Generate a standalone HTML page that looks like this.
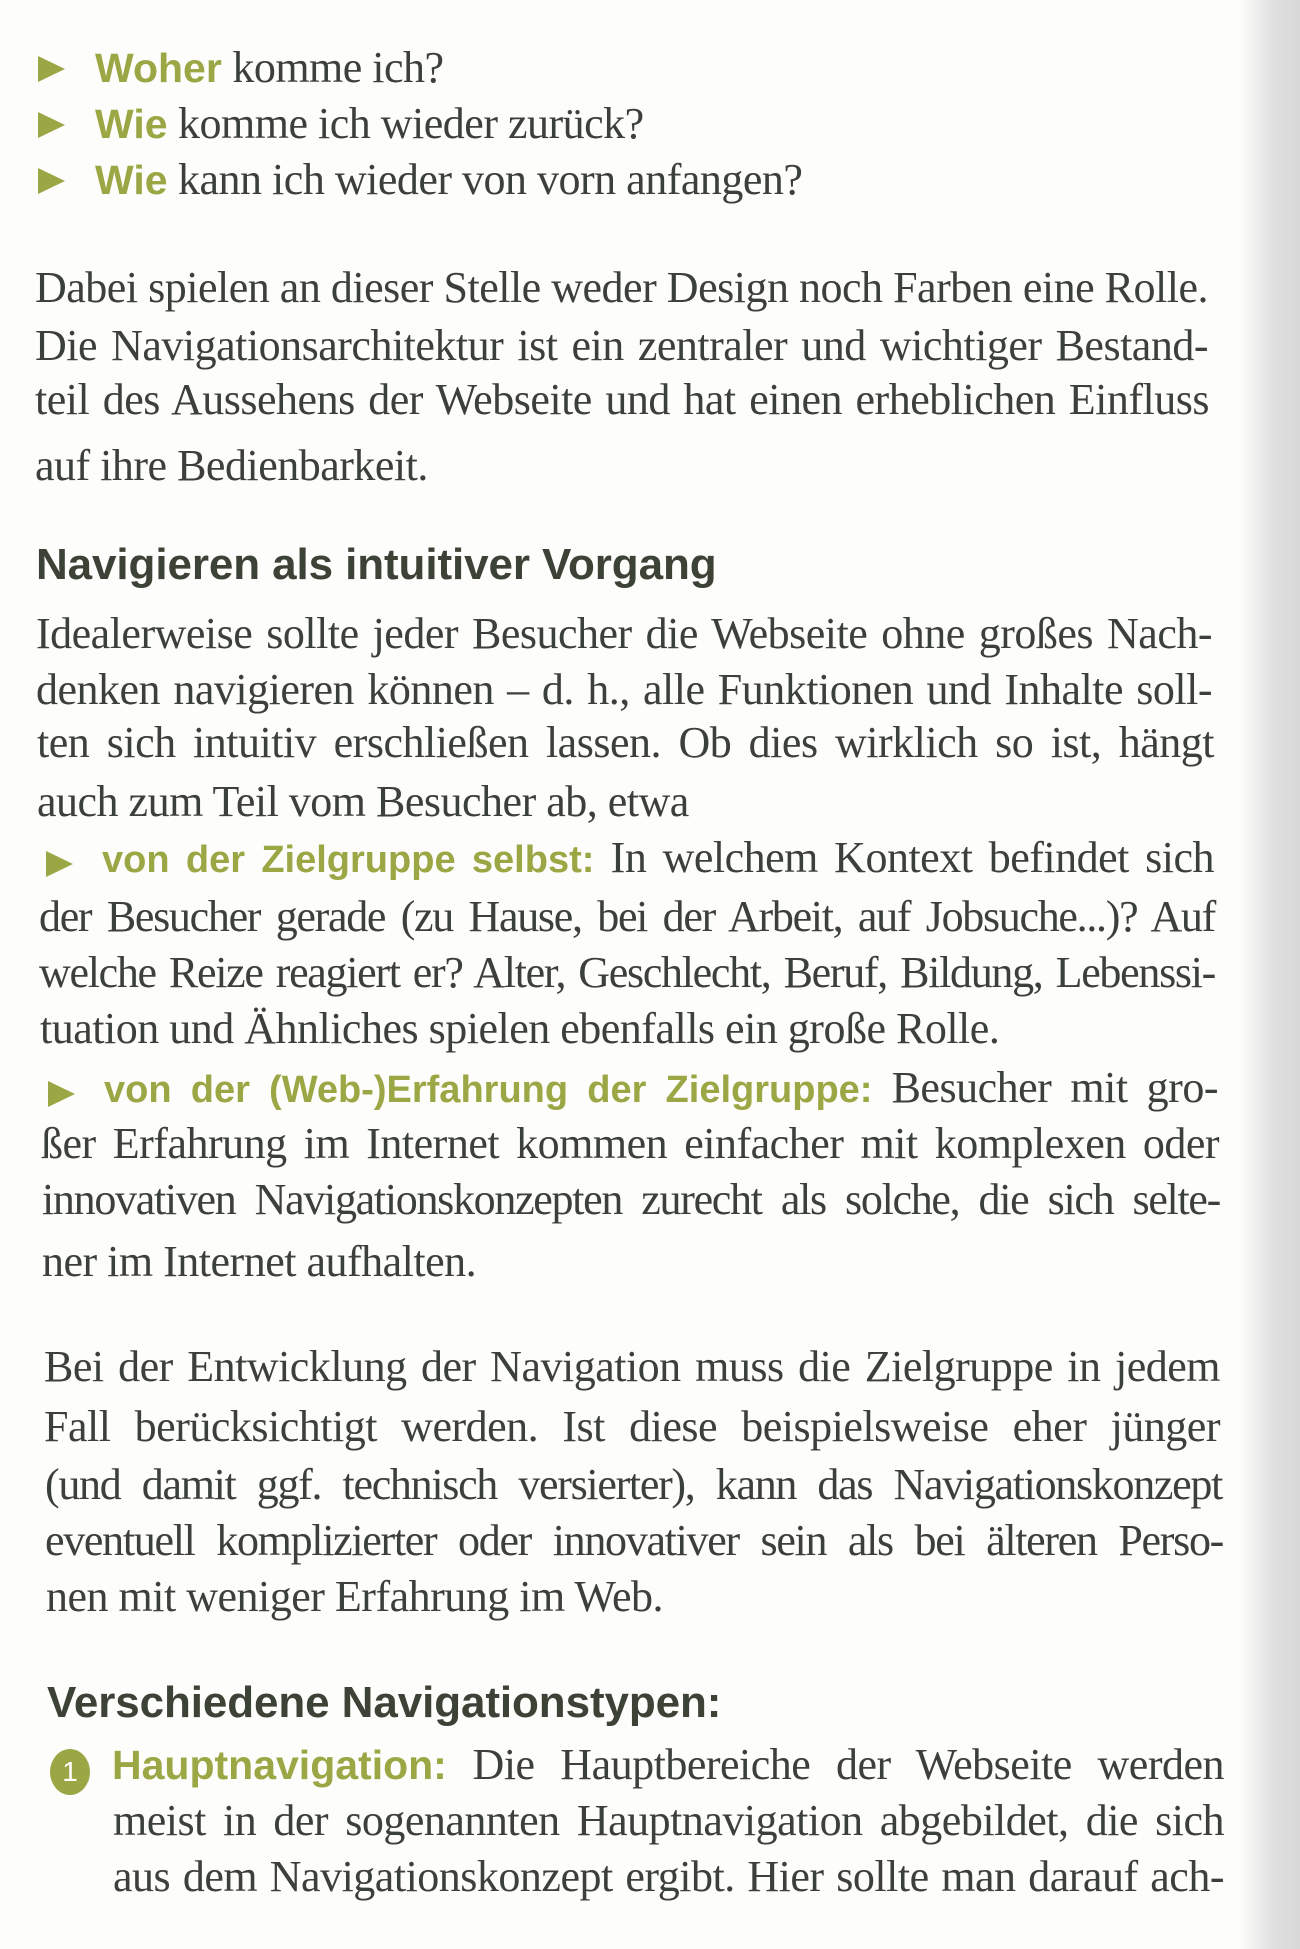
<!DOCTYPE html>
<html><head><meta charset="utf-8">
<style>
html,body{margin:0;padding:0}
body{width:1300px;height:1949px;position:relative;overflow:hidden;background:#fdfdfb;
font-family:"Liberation Serif",serif;color:#3c403c}
.shade{position:absolute;right:0;top:0;width:60px;height:1949px;background:linear-gradient(to right,rgba(230,230,230,0),#e0e0e0 55%,#d8d8d8)}
.l{position:absolute;height:56px;line-height:56px;font-size:44px;white-space:nowrap;text-align:justify;text-align-last:justify;letter-spacing:-0.5px}
.t{letter-spacing:-1.3px}
.n{text-align:left;text-align-last:left}
.g{color:#9aa744;font-family:"Liberation Sans",sans-serif;font-weight:bold;font-size:38px;letter-spacing:0}
.gn{color:#9aa744;font-family:"Liberation Sans",sans-serif;font-weight:bold;font-size:41px;letter-spacing:0}
.h{position:absolute;font-family:"Liberation Sans",sans-serif;font-weight:bold;font-size:44px;color:#3d4236;white-space:nowrap;letter-spacing:-0.1px}
.tri{position:absolute;width:0;height:0;border-top:13px solid transparent;border-bottom:13px solid transparent;border-left:27px solid #9aa744}
.num{position:absolute;width:40px;height:46px;border-radius:50%;background:#9aa744;color:#fff;font-family:"Liberation Sans",sans-serif;font-size:28px;text-align:center;line-height:46px}
</style></head><body>
<div class="shade"></div>

<div class="tri" style="left:38px;top:56px"></div>
<div class="l n" style="left:95px;top:40px"><span class="gn">Woher</span> komme ich?</div>
<div class="tri" style="left:38px;top:112px"></div>
<div class="l n" style="left:95px;top:96px"><span class="gn">Wie</span> komme ich wieder zurück?</div>
<div class="tri" style="left:38px;top:168px"></div>
<div class="l n" style="left:95px;top:152px"><span class="gn">Wie</span> kann ich wieder von vorn anfangen?</div>

<div class="l" style="left:35px;top:260px;width:1173px">Dabei spielen an dieser Stelle weder Design noch Farben eine Rolle.</div>
<div class="l" style="left:35px;top:318px;width:1173px">Die Navigationsarchitektur ist ein zentraler und wichtiger Bestand-</div>
<div class="l" style="left:35px;top:372px;width:1174px">teil des Aussehens der Webseite und hat einen erheblichen Einfluss</div>
<div class="l n" style="left:35px;top:438px">auf ihre Bedienbarkeit.</div>

<div class="h" style="left:36px;top:540px">Navigieren als intuitiver Vorgang</div>

<div class="l" style="left:36px;top:606px;width:1176px">Idealerweise sollte jeder Besucher die Webseite ohne großes Nach-</div>
<div class="l" style="left:36px;top:662px;width:1176px">denken navigieren können – d. h., alle Funktionen und Inhalte soll-</div>
<div class="l" style="left:37px;top:715px;width:1177px">ten sich intuitiv erschließen lassen. Ob dies wirklich so ist, hängt</div>
<div class="l n" style="left:37px;top:774px">auch zum Teil vom Besucher ab, etwa</div>

<div class="tri" style="left:46px;top:851px"></div>
<div class="l" style="left:102px;top:830px;width:1112px"><span class="g">von der Zielgruppe selbst:</span> In welchem Kontext befindet sich</div>
<div class="l t" style="left:39px;top:889px;width:1176px">der Besucher gerade (zu Hause, bei der Arbeit, auf Jobsuche...)? Auf</div>
<div class="l t" style="left:39px;top:945px;width:1176px">welche Reize reagiert er? Alter, Geschlecht, Beruf, Bildung, Lebenssi-</div>
<div class="l n" style="left:40px;top:1001px">tuation und Ähnliches spielen ebenfalls ein große Rolle.</div>

<div class="tri" style="left:48px;top:1081px"></div>
<div class="l" style="left:104px;top:1060px;width:1114px"><span class="g">von der (Web-)Erfahrung der Zielgruppe:</span> Besucher mit gro-</div>
<div class="l" style="left:41px;top:1116px;width:1178px">ßer Erfahrung im Internet kommen einfacher mit komplexen oder</div>
<div class="l t" style="left:42px;top:1172px;width:1178px">innovativen Navigationskonzepten zurecht als solche, die sich selte-</div>
<div class="l n" style="left:42px;top:1234px">ner im Internet aufhalten.</div>

<div class="l" style="left:44px;top:1339px;width:1176px">Bei der Entwicklung der Navigation muss die Zielgruppe in jedem</div>
<div class="l" style="left:44px;top:1399px;width:1176px">Fall berücksichtigt werden. Ist diese beispielsweise eher jünger</div>
<div class="l t" style="left:45px;top:1457px;width:1177px">(und damit ggf. technisch versierter), kann das Navigationskonzept</div>
<div class="l t" style="left:45px;top:1513px;width:1178px">eventuell komplizierter oder innovativer sein als bei älteren Perso-</div>
<div class="l n" style="left:46px;top:1569px">nen mit weniger Erfahrung im Web.</div>

<div class="h" style="left:47px;top:1678px">Verschiedene Navigationstypen:</div>

<div class="num" style="left:50px;top:1749px">1</div>
<div class="l" style="left:112px;top:1737px;width:1112px"><span class="gn">Hauptnavigation:</span> Die Hauptbereiche der Webseite werden</div>
<div class="l" style="left:113px;top:1793px;width:1111px">meist in der sogenannten Hauptnavigation abgebildet, die sich</div>
<div class="l" style="left:113px;top:1849px;width:1111px">aus dem Navigationskonzept ergibt. Hier sollte man darauf ach-</div>
</body></html>
